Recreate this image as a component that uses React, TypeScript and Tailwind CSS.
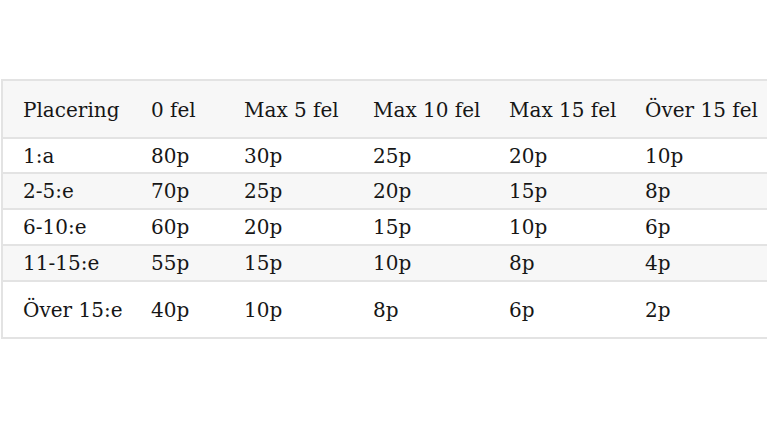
import React from "react";

const header = ["Placering", "0 fel", "Max 5 fel", "Max 10 fel", "Max 15 fel", "Över 15 fel"];

const rows: { cells: string[]; shaded: boolean; h: string }[] = [
  { cells: ["1:a", "80p", "30p", "25p", "20p", "10p"], shaded: false, h: "h-[35px]" },
  { cells: ["2-5:e", "70p", "25p", "20p", "15p", "8p"], shaded: true, h: "h-[36px]" },
  { cells: ["6-10:e", "60p", "20p", "15p", "10p", "6p"], shaded: false, h: "h-[36px]" },
  { cells: ["11-15:e", "55p", "15p", "10p", "8p", "4p"], shaded: true, h: "h-[36px]" },
  { cells: ["Över 15:e", "40p", "10p", "8p", "6p", "2p"], shaded: false, h: "h-[55px]" },
];

const cols = "grid grid-cols-[128px_93px_129px_136px_136px_200px]";

export default function App() {
  return (
    <div
      className="w-full h-[440px] overflow-hidden bg-white pt-[79px] pl-[1px] text-[#161616] oldstyle-nums"
      style={{ fontFamily: '"DejaVu Serif", "Liberation Serif", Georgia, serif' }}
    >
      <div className="w-[824px] border-2 border-[#e3e3e3] text-[20px]">
        <div className={`${cols} h-[58px] bg-[#f7f7f7] border-b-2 border-[#e3e3e3]`}>
          {header.map((h) => (
            <div key={h} className="flex items-center pl-[20px] pt-[2px] whitespace-nowrap">
              {h}
            </div>
          ))}
        </div>
        {rows.map((r, i) => (
          <div
            key={r.cells[0]}
            className={`${cols} ${r.h} ${r.shaded ? "bg-[#f7f7f7]" : "bg-white"} ${
              i < rows.length - 1 ? "border-b-2 border-[#e3e3e3]" : ""
            }`}
          >
            {r.cells.map((c, j) => (
              <div key={j} className="flex items-center pl-[20px] whitespace-nowrap">
                {c}
              </div>
            ))}
          </div>
        ))}
      </div>
    </div>
  );
}
